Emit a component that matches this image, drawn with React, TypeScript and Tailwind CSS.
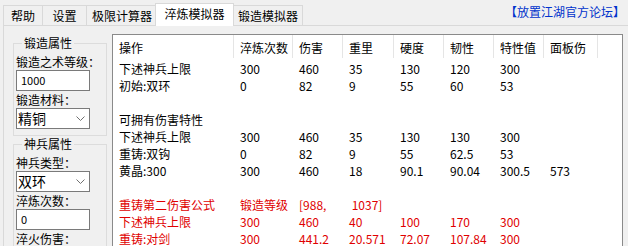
import type { ReactNode } from "react";

const colW = [
  "w-[121px]",
  "w-[59px]",
  "w-[50px]",
  "w-[51px]",
  "w-[50px]",
  "w-[50px]",
  "w-[50px]",
  "w-[54px]",
];

const headers = ["操作", "淬炼次数", "伤害", "重里", "硬度", "韧性", "特性值", "面板伤"];

const rows: { cells: string[]; red?: boolean }[] = [
  { cells: ["下述神兵上限", "300", "460", "35", "130", "120", "300"] },
  { cells: ["初始:双环", "0", "82", "9", "55", "60", "53"] },
  { cells: [] },
  { cells: ["可拥有伤害特性"] },
  { cells: ["下述神兵上限", "300", "460", "35", "130", "130", "300"] },
  { cells: ["重铸:双钩", "0", "82", "9", "55", "62.5", "53"] },
  { cells: ["黄晶:300", "300", "460", "18", "90.1", "90.04", "300.5", "573"] },
  { cells: [] },
  { cells: ["重铸第二伤害公式", "锻造等级", "[988,", " 1037]"], red: true },
  { cells: ["下述神兵上限", "300", "460", "40", "100", "170", "300"], red: true },
  { cells: ["重铸:对剑", "300", "441.2", "20.571", "72.07", "107.84", "300"], red: true },
];

const Group = ({ title, children, className = "" }: { title: string; children: ReactNode; className?: string }) => (
  <fieldset className={"w-[94px] border border-[#dcdcdc] px-[2px] pb-[6px] " + className}>
    <legend className="ml-[6px] px-[2px] leading-[14px]">{title}</legend>
    {children}
  </fieldset>
);

const Label = ({ text, first }: { text: string; first?: boolean }) => (
  <div className={(first ? "mt-[4px]" : "mt-[1px]") + " h-[15px] leading-[15px] whitespace-nowrap"}>{text}</div>
);

const TextBox = ({ value }: { value: string }) => (
  <div className="mt-[1px] flex h-[21px] w-[74px] items-center border border-[#7a7a7a] bg-white pl-[4px] text-[11px]">
    {value}
  </div>
);

const Select = ({ value }: { value: string }) => (
  <div className="mt-[1px] flex h-[21px] w-[74px] items-center justify-between border border-[#7a7a7a] bg-white pl-[1px] pr-[4px] text-[14px]">
    <span>{value}</span>
    <svg width="9" height="6" viewBox="0 0 9 6">
      <polyline points="0.5,0.5 4.5,4.5 8.5,0.5" fill="none" stroke="#707070" strokeWidth="1" />
    </svg>
  </div>
);

const tabBase = "flex items-center justify-center border-t border-l border-r border-[#d9d9d9]";

export default function App() {
  return (
    <div
      className="h-[246px] w-[628px] overflow-hidden bg-[#f0f0f0] text-[12px] text-black"
      style={{ fontFamily: '"Noto Sans CJK SC", "Noto Sans", sans-serif' }}
    >
      {/* tab strip */}
      <div className="flex h-[25px] items-end justify-between pl-[3px] pr-[3px]">
        <div className="flex items-end">
          <div className={tabBase + " h-[20px] w-[40px]"}>帮助</div>
          <div className={tabBase + " -ml-px h-[20px] w-[45px]"}>设置</div>
          <div className={tabBase + " -ml-px h-[20px] w-[72px]"}>极限计算器</div>
          <div className={tabBase + " relative z-10 -mb-px -ml-[3px] -mr-[1px] h-[23px] w-[79px] bg-white pb-[2px]"}>
            淬炼模拟器
          </div>
          <div className={tabBase + " h-[20px] w-[70px]"}>锻造模拟器</div>
        </div>
        <div className="mb-[2px] self-center text-[#0033cc]">【放置江湖官方论坛】</div>
      </div>

      {/* tab page */}
      <div className="ml-[3px] flex h-[221px] border-l border-t border-[#d9d9d9]">
        <div className="pl-[9px] pt-[10px]">
          <Group title="锻造属性">
            <Label text="锻造之术等级：" first />
            <TextBox value="1000" />
            <Label text="锻造材料：" />
            <Select value="精铜" />
          </Group>
          <Group title="神兵属性" className="mt-[1px]">
            <Label text="神兵类型：" first />
            <Select value="双环" />
            <Label text="淬炼次数：" />
            <TextBox value="0" />
            <Label text="淬火伤害：" />
          </Group>
        </div>

        <div className="ml-[5px] mt-[8px] h-[240px] w-[511px] border border-[#8a8a8a] bg-white">
          <div className="flex h-[25px]">
            {headers.map((h, i) => (
              <div
                key={h}
                className={colW[i] + " h-[23px] border-r border-[#e5e5e5] pl-[6px] pt-[5px] leading-[15px] whitespace-nowrap"}
              >
                {h}
              </div>
            ))}
          </div>
          {rows.map((r, ri) => (
            <div key={ri} className={"flex h-[17px] leading-[17px] " + (r.red ? "text-[#e00000]" : "")}>
              {r.cells.map((c, ci) => (
                <div key={ci} className={colW[ci] + " pl-[6px] whitespace-pre"}>
                  {c}
                </div>
              ))}
            </div>
          ))}
        </div>
      </div>
    </div>
  );
}
